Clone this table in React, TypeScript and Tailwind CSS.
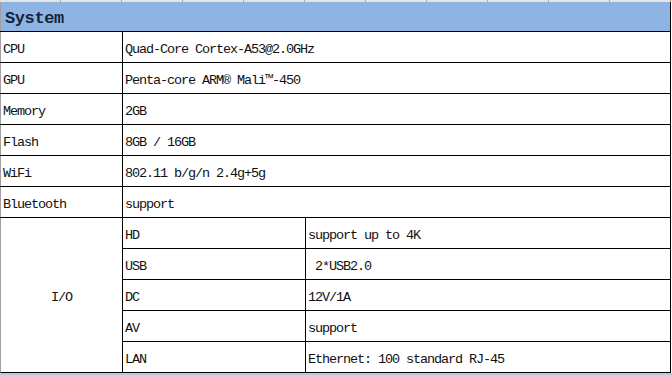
import React from "react";

// --- DATA: spec rows ---
const SPECS = [
  { label: "CPU", value: "Quad-Core Cortex-A53@2.0GHz" },
  { label: "GPU", value: "Penta-core ARM® Mali™-450" },
  { label: "Memory", value: "2GB" },
  { label: "Flash", value: "8GB / 16GB" },
  { label: "WiFi", value: "802.11 b/g/n 2.4g+5g" },
  { label: "Bluetooth", value: "support" },
];

const IO = [
  { label: "HD", value: "support up to 4K" },
  { label: "USB", value: "\u00a02*USB2.0" },
  { label: "DC", value: "12V/1A" },
  { label: "AV", value: "support" },
  { label: "LAN", value: "Ethernet: 100 standard RJ-45" },
];

const cellText = "text-[13.5px] tracking-[-1.1px] text-[#111] leading-none pt-[5px]";

const App = () => {
  return (
    <div
      className="w-[672px] h-[375px] overflow-hidden bg-white flex flex-col"
      style={{ fontFamily: '"Liberation Mono", "Noto Sans CJK SC", monospace' }}
    >
      {/* Sheet grid strip */}
      <div className="h-[2px] flex bg-[#e4e4e4]">
        {Array.from({ length: 11 }).map((_, i) => (
          <div key={i} className="w-[61px] h-full border-r border-[#a8a8a8]" />
        ))}
      </div>

      {/* Header */}
      <div className="h-[30px] w-[671px] bg-[#8db4e2] border-l border-[#a0a0a0] border-r border-r-black flex items-center pl-1">
        <span className="text-[17px] font-bold tracking-[-0.4px] text-[#15243c] leading-none pt-[3px]">System</span>
      </div>

      {/* Table */}
      <div className="w-[671px] border-t border-black">
        {SPECS.map((row) => (
          <div key={row.label} className="h-[31px] flex border-b border-black">
            <div className={`w-[123px] shrink-0 border-l border-[#a0a0a0] border-r border-r-black flex items-center pl-[2px] ${cellText}`}>
              {row.label}
            </div>
            <div className={`flex-1 border-r border-black flex items-center pl-[2px] ${cellText}`}>
              {row.value}
            </div>
          </div>
        ))}

        {/* I/O block */}
        <div className="flex">
          <div className={`w-[123px] shrink-0 border-l border-[#a0a0a0] border-r border-r-black border-b border-b-black flex items-center justify-center ${cellText}`}>
            I/O
          </div>
          <div className="flex-1 flex flex-col">
            {IO.map((row) => (
              <div key={row.label} className="h-[31px] flex border-b border-black">
                <div className={`w-[183px] shrink-0 border-r border-black flex items-center pl-[2px] ${cellText}`}>
                  {row.label}
                </div>
                <div className={`flex-1 border-r border-black flex items-center pl-[2px] ${cellText}`}>
                  {row.value}
                </div>
              </div>
            ))}
          </div>
        </div>
      </div>

      {/* Bottom strip */}
      <div className="h-[2px] bg-[#b3cae6]" />
    </div>
  );
};

export default App;
